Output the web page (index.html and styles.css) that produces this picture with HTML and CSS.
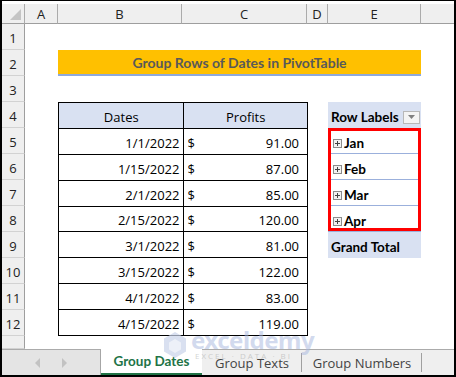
FILE: index.html
```html
<!DOCTYPE html>
<html lang="en">
<head>
    <meta charset="UTF-8">
    <title>Group Rows of Dates in PivotTable</title>
    <link rel="stylesheet" href="styles.css">
</head>
<body>
    <div class="workbook">
        <div class="sheet">
            <!-- column headers -->
            <div class="corner"><span class="corner-tri"></span></div>
            <div class="col-head">A</div>
            <div class="col-head">B</div>
            <div class="col-head">C</div>
            <div class="col-head">D</div>
            <div class="col-head">E</div>
            <div class="col-head last"></div>

            <!-- row headers -->
            <div class="row-head" style="grid-row: 2">1</div>
            <div class="row-head" style="grid-row: 3">2</div>
            <div class="row-head" style="grid-row: 4">3</div>
            <div class="row-head" style="grid-row: 5">4</div>
            <div class="row-head" style="grid-row: 6">5</div>
            <div class="row-head" style="grid-row: 7">6</div>
            <div class="row-head" style="grid-row: 8">7</div>
            <div class="row-head" style="grid-row: 9">8</div>
            <div class="row-head" style="grid-row: 10">9</div>
            <div class="row-head" style="grid-row: 11">10</div>
            <div class="row-head" style="grid-row: 12">11</div>
            <div class="row-head" style="grid-row: 13">12</div>
            <div class="row-head" style="grid-row: 14"></div>

            <!-- title -->
            <div class="title">Group Rows of Dates in PivotTable</div>

            <!-- data table -->
            <div class="data-table">
                <div class="th">Dates</div>
                <div class="th">Profits</div>

                <div class="td date">1/1/2022</div>
                <div class="td money"><span>$</span><span>91.00</span></div>
                <div class="td date">1/15/2022</div>
                <div class="td money"><span>$</span><span>87.00</span></div>
                <div class="td date">2/1/2022</div>
                <div class="td money"><span>$</span><span>85.00</span></div>
                <div class="td date">2/15/2022</div>
                <div class="td money"><span>$</span><span>120.00</span></div>
                <div class="td date">3/1/2022</div>
                <div class="td money"><span>$</span><span>81.00</span></div>
                <div class="td date">3/15/2022</div>
                <div class="td money"><span>$</span><span>122.00</span></div>
                <div class="td date">4/1/2022</div>
                <div class="td money"><span>$</span><span>83.00</span></div>
                <div class="td date">4/15/2022</div>
                <div class="td money"><span>$</span><span>119.00</span></div>
            </div>

            <!-- pivot table -->
            <div class="pivot">
                <div class="pv-head">
                    <span>Row Labels</span>
                    <span class="dropdown"><svg width="7" height="4" viewBox="0 0 7 4"><path d="M0 0h7L3.5 4z" fill="#808080"/></svg></span>
                </div>
                <div class="pv-row"><span class="expand"></span>Jan</div>
                <div class="pv-row"><span class="expand"></span>Feb</div>
                <div class="pv-row"><span class="expand"></span>Mar</div>
                <div class="pv-row"><span class="expand"></span>Apr</div>
                <div class="pv-total">Grand Total</div>
                <div class="highlight"></div>
            </div>
        </div>

        <div class="tabs">
            <div class="tab-nav">
                <span class="arrow left"></span>
                <span class="arrow right"></span>
            </div>
            <div class="tab active">Group Dates</div>
            <div class="tab">Group Texts</div>
            <div class="tab">Group Numbers</div>
            <div class="tab-rest"></div>
        </div>

        <!-- watermark -->
        <div class="watermark">
            <svg class="wm-logo" width="26" height="28" viewBox="0 0 26 28">
                <path d="M13 1l11 6.5v13L13 27 2 20.5v-13z" fill="#c9d3ea"/>
                <path d="M13 8l6 3.5v7L13 22l-6-3.5v-7z" fill="#e6ebf6"/>
            </svg>
            <div class="wm-text">
                <div class="wm-name">exceldemy</div>
                <div class="wm-sub">EXCEL · DATA · BI</div>
            </div>
        </div>
    </div>
</body>
</html>
```

FILE: styles.css
```css
* {
    margin: 0;
    padding: 0;
    box-sizing: border-box;
}

body {
    font-family: "Open Sans", "Liberation Sans", sans-serif;
    background-color: #fff;
}

.workbook {
    position: relative;
    width: 456px;
    height: 377px;
    border: 2px solid #000;
    border-top-width: 1px;
    overflow: hidden;
    background-color: #fff;
}

.sheet {
    display: grid;
    grid-template-columns: 23px 33px 124px 125px 21px 93px 1fr;
    grid-template-rows: 20px repeat(12, 26px) 13px;
    margin-top: 3px;
    font-size: 13px;
    color: #000;
}

/* headers */
.corner {
    grid-row: 1;
    grid-column: 1;
    position: relative;
    background-color: #efefef;
    border-right: 1px solid #ababab;
    border-bottom: 1px solid #9e9e9e;
}

.corner-tri {
    position: absolute;
    right: 3px;
    bottom: 3px;
    width: 0;
    height: 0;
    border-left: 11px solid transparent;
    border-bottom: 11px solid #c4c4c4;
}

.col-head {
    display: flex;
    align-items: center;
    justify-content: center;
    background-color: #efefef;
    border-right: 1px solid #ababab;
    border-bottom: 1px solid #9e9e9e;
    color: #222;
    padding-top: 1px;
}

.col-head.last {
    border-right: none;
}

.row-head {
    grid-column: 1;
    display: flex;
    align-items: center;
    justify-content: center;
    background-color: #efefef;
    border-right: 1px solid #9e9e9e;
    border-bottom: 1px solid #d2d2d2;
    color: #222;
    padding-top: 3px;
}

/* title */
.title {
    grid-column: 3 / 7;
    grid-row: 3;
    display: flex;
    align-items: center;
    justify-content: center;
    background-color: #ffc000;
    border-bottom: 2px solid #8ea9db;
    color: #595959;
    font-family: Lato, "Open Sans", sans-serif;
    font-weight: 700;
    font-size: 14px;
    padding-top: 1px;
}

/* data table */
.data-table {
    grid-column: 3 / 5;
    grid-row: 5 / 14;
    display: grid;
    grid-template-columns: 1fr 1fr;
    grid-template-rows: repeat(9, 1fr);
    gap: 1px;
    padding: 1px;
    background-color: #000;
    margin-right: -1px;
}

.th, .td {
    display: flex;
    align-items: center;
    background-color: #fff;
    padding: 3px 3px 0 4px;
}

.th {
    justify-content: center;
    background-color: #d9e1f2;
}

.date {
    justify-content: flex-end;
}

.money {
    justify-content: space-between;
    padding-right: 8px;
}

/* pivot */
.pivot {
    position: relative;
    grid-column: 6;
    grid-row: 5 / 11;
    display: flex;
    flex-direction: column;
    font-family: Lato, "Open Sans", sans-serif;
    font-weight: 700;
    font-size: 13.5px;
    white-space: nowrap;
}

.pv-head, .pv-row, .pv-total {
    height: 26px;
    display: flex;
    align-items: center;
    padding: 3px 0 0 3px;
}

.pv-head {
    background-color: #d9e1f2;
    justify-content: space-between;
}

.dropdown {
    width: 17px;
    height: 13px;
    margin: 1px 1px 0 0;
    border: 1px solid #b8b8b8;
    background-color: #f4f4f4;
    display: flex;
    align-items: center;
    justify-content: center;
}

.pv-row {
    border-bottom: 1px solid #9bb0dc;
    padding-left: 5px;
    padding-top: 5px;
}

.expand {
    position: relative;
    width: 9px;
    height: 9px;
    border: 1px solid #8c8c8c;
    background-color: #f2f2f2;
    margin-right: 2px;
}

.expand::before, .expand::after {
    content: "";
    position: absolute;
    background-color: #444;
}

.expand::before {
    left: 1px;
    top: 3px;
    width: 5px;
    height: 1px;
}

.expand::after {
    left: 3px;
    top: 1px;
    width: 1px;
    height: 5px;
}

.pv-total {
    background-color: #d9e1f2;
}

.highlight {
    position: absolute;
    left: 0;
    top: 26px;
    width: 93px;
    height: 103px;
    border: 3px solid #ff0000;
}

/* sheet tabs */
.tabs {
    position: absolute;
    left: 0;
    right: 0;
    bottom: 0;
    height: 26px;
    display: flex;
    background-color: #efefef;
    border-top: 1px solid #ababab;
    font-size: 13px;
}

.tab-nav {
    width: 99px;
    display: flex;
    align-items: center;
    justify-content: center;
    gap: 22px;
    background-color: #e4e4e4;
    border-right: 1px solid #a6a6a6;
}

.arrow {
    width: 0;
    height: 0;
    border-top: 5px solid transparent;
    border-bottom: 5px solid transparent;
}

.arrow.left {
    border-right: 5px solid #c2c2c2;
}

.arrow.right {
    border-left: 5px solid #c2c2c2;
}

.tab {
    display: flex;
    align-items: center;
    justify-content: center;
    color: #444;
    width: 100px;
    position: relative;
}

.tab::after {
    content: "";
    position: absolute;
    right: 0;
    top: 3px;
    bottom: 3px;
    width: 1px;
    background-color: #a0a0a0;
}

.tab.active {
    width: 101px;
    margin-top: -1px;
    background-color: #fff;
    color: #217346;
    font-family: Lato, "Open Sans", sans-serif;
    font-weight: 700;
    font-size: 13.5px;
    border-bottom: 2px solid #217346;
}

.tab.active::after {
    display: none;
}

.tab:nth-child(4) {
    width: 120px;
}

.tab-rest {
    flex: 1;
}

/* watermark */
.watermark {
    position: absolute;
    left: 160px;
    top: 328px;
    display: flex;
    align-items: center;
    gap: 3px;
    opacity: 0.7;
    pointer-events: none;
}

.wm-name {
    font-family: "Noto Sans", sans-serif;
    font-size: 24px;
    font-weight: 700;
    line-height: 22px;
    color: rgba(170, 186, 224, 0.75);
    letter-spacing: -0.5px;
}

.wm-sub {
    font-size: 8px;
    letter-spacing: 2px;
    line-height: 10px;
    color: rgba(150, 150, 150, 0.6);
    margin-left: 4px;
}
```
